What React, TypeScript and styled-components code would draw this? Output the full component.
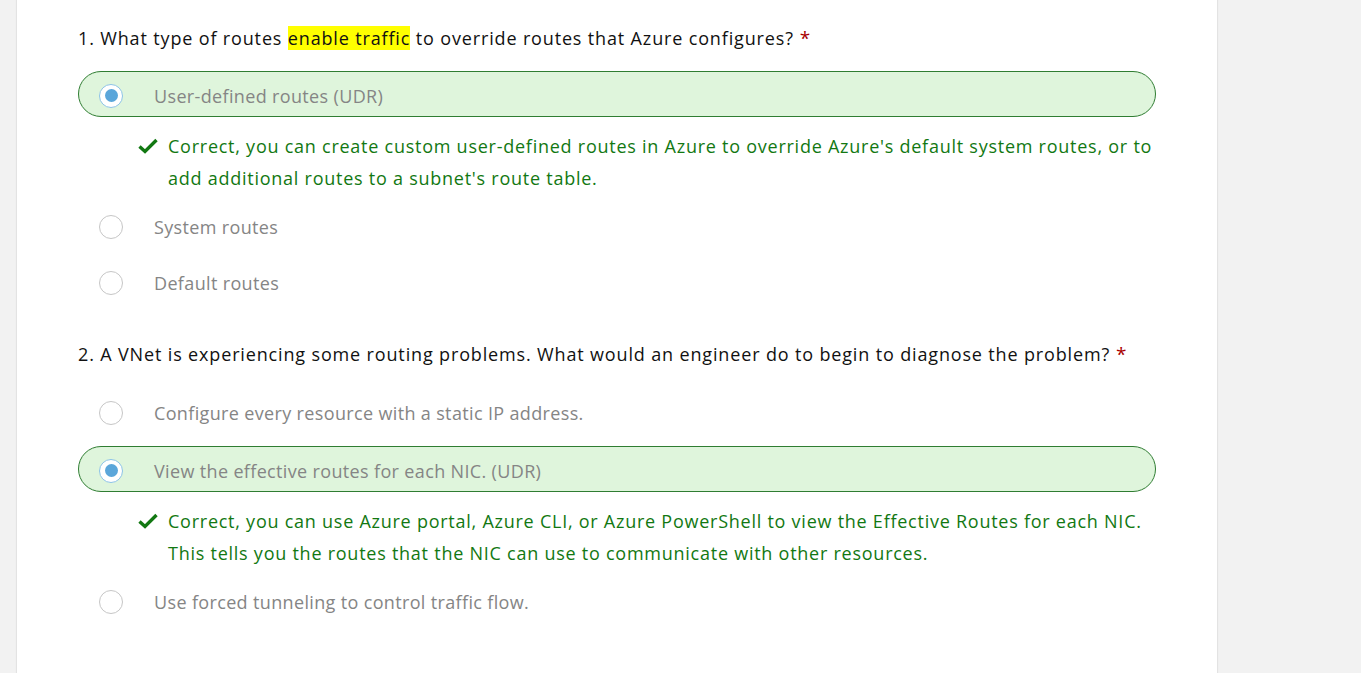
import React from "react";
import styled, { createGlobalStyle } from "styled-components";

const Global = createGlobalStyle`
  html, body { margin: 0; padding: 0; background: #f2f2f2; }
  body { font-family: "Open Sans", "Noto Sans", sans-serif; }
  * { box-sizing: border-box; }
`;

const Page = styled.div`
  display: flex;
  min-height: 100vh;
  padding-left: 17px;
`;

const Card = styled.main`
  width: 1200px;
  min-height: 100vh;
  background: #ffffff;
  box-shadow: -1px 0 1px rgba(0, 0, 0, 0.06), 1px 0 1px rgba(0, 0, 0, 0.06);
  padding: 24px 61px 0;
`;

const Question = styled.section<{ $top: number; $titleGap: number }>`
  display: flex;
  flex-direction: column;
  margin-top: ${(p) => p.$top}px;
  gap: ${(p) => p.$titleGap}px;
`;

const Title = styled.h2`
  margin: 0;
  font-size: 18px;
  line-height: 28px;
  font-weight: 400;
  letter-spacing: 0.85px;
  color: #111111;
`;

const Mark = styled.span`
  background: #ffff00;
`;

const Required = styled.span`
  color: #a80000;
  margin-left: 6px;
  font-size: 19px;
`;

const Options = styled.div`
  display: flex;
  flex-direction: column;
  gap: 10px;
`;

const Row = styled.div<{ $selected?: boolean }>`
  display: flex;
  align-items: center;
  gap: 31px;
  height: 46px;
  padding: ${(p) => (p.$selected ? "3px" : "0")} 0 0 20px;
  border: 1px solid ${(p) => (p.$selected ? "#2f7d32" : "transparent")};
  border-radius: 23px;
  background: ${(p) => (p.$selected ? "#dff5dc" : "transparent")};
`;

const Radio = styled.span<{ $checked?: boolean }>`
  flex: none;
  width: 24px;
  height: 24px;
  border-radius: 50%;
  background: #ffffff;
  border: ${(p) => (p.$checked ? "1.5px solid #8cc3e6" : "1px solid #c6c6c6")};
  display: flex;
  align-items: center;
  justify-content: center;
  &::after {
    content: "";
    display: ${(p) => (p.$checked ? "block" : "none")};
    width: 13px;
    height: 13px;
    border-radius: 50%;
    background: #5aa6da;
  }
`;

const Label = styled.span`
  font-size: 18px;
  letter-spacing: 0.35px;
  color: #858585;
  line-height: 24px;
`;

const Feedback = styled.div`
  display: flex;
  gap: 10px;
  margin-top: 3px;
  padding-left: 60px;
  color: #127812;
  font-size: 18px;
  letter-spacing: 0.75px;
  line-height: 32px;
`;

const CheckIcon = styled.svg`
  flex: none;
  width: 20px;
  height: 32px;
`;

const FeedbackText = styled.p`
  margin: 0;
  flex: 1;
`;

type Opt = { text: string; selected?: boolean; feedback?: string };

const Check = () => (
  <CheckIcon viewBox="0 0 20 32">
    <path d="M1.5 16.5 L7 21.5 L18.5 10" fill="none" stroke="#127812" strokeWidth="3.4" />
  </CheckIcon>
);

const OptionList = ({ options }: { options: Opt[] }) => (
  <Options>
    {options.map((o) => (
      <React.Fragment key={o.text}>
        <Row $selected={o.selected}>
          <Radio $checked={o.selected} />
          <Label>{o.text}</Label>
        </Row>
        {o.feedback && (
          <Feedback>
            <Check />
            <FeedbackText>{o.feedback}</FeedbackText>
          </Feedback>
        )}
      </React.Fragment>
    ))}
  </Options>
);

export default function App() {
  return (
    <>
      <Global />
      <Page>
        <Card>
          <Question $top={0} $titleGap={19}>
            <Title>
              1. What type of routes <Mark>enable traffic</Mark> to override routes that Azure configures?
              <Required>*</Required>
            </Title>
            <OptionList
              options={[
                {
                  text: "User-defined routes (UDR)",
                  selected: true,
                  feedback:
                    "Correct, you can create custom user-defined routes in Azure to override Azure's default system routes, or to add additional routes to a subnet's route table.",
                },
                { text: "System routes" },
                { text: "Default routes" },
              ]}
            />
          </Question>
          <Question $top={34} $titleGap={22}>
            <Title>
              2. A VNet is experiencing some routing problems. What would an engineer do to begin to diagnose the problem?
              <Required>*</Required>
            </Title>
            <OptionList
              options={[
                { text: "Configure every resource with a static IP address." },
                {
                  text: "View the effective routes for each NIC. (UDR)",
                  selected: true,
                  feedback:
                    "Correct, you can use Azure portal, Azure CLI, or Azure PowerShell to view the Effective Routes for each NIC. This tells you the routes that the NIC can use to communicate with other resources.",
                },
                { text: "Use forced tunneling to control traffic flow." },
              ]}
            />
          </Question>
        </Card>
      </Page>
    </>
  );
}
